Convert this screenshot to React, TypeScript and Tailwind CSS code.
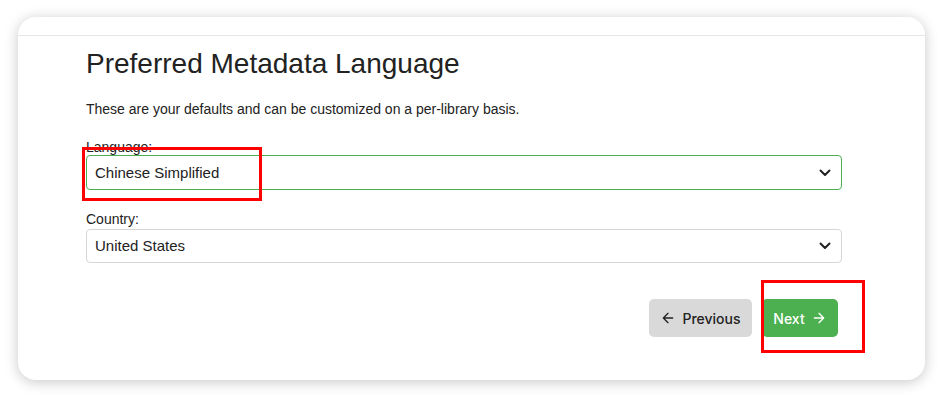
import React from "react";

function Chevron() {
  return (
    <svg width="12" height="8" viewBox="0 0 12 8" fill="none" className="shrink-0">
      <path d="M1.5 1.5 6 6l4.5-4.5" stroke="#222" strokeWidth="2" strokeLinecap="round" strokeLinejoin="round" />
    </svg>
  );
}

function SelectBox({ value, active }: { value: string; active?: boolean }) {
  return (
    <div
      className={`flex items-center justify-between rounded-[4px] border bg-white pl-[8px] pr-[10px] text-[15px] text-[#222] ${
        active ? "h-[35px] border-[#4caf50]" : "h-[34px] border-[#d6d6d6]"
      }`}
    >
      <span>{value}</span>
      <Chevron />
    </div>
  );
}

export default function App() {
  return (
    <div
      className="relative h-[398px] w-[943px] overflow-hidden bg-white px-[18px] pt-[17px]"
      style={{ fontFamily: '"Liberation Sans", Arial, sans-serif' }}
    >
      <div className="h-[363px] rounded-[18px] bg-white shadow-[0_2px_14px_rgba(0,0,0,0.22)]">
        <div className="h-[19px] border-b border-[#e6e6e6]" />
        <div className="pl-[68px] pr-[83px]">
          <h1 className="mt-[12px] text-[28px] leading-[32px] text-[#222]">Preferred Metadata Language</h1>
          <p className="mt-[19px] text-[14px] leading-[20px] text-[#222]">
            These are your defaults and can be customized on a per-library basis.
          </p>
          <div className="mt-[18px] text-[14px] leading-[20px] text-[#222]">
            <div className="-mb-[1px] h-[19px] overflow-hidden">Language:</div>
            <SelectBox value="Chinese Simplified" active />
            <div className="mt-[19px] h-[20px]">Country:</div>
            <SelectBox value="United States" />
          </div>
          <div
            className="mt-[36px] flex justify-end gap-[10px] pr-[4px] text-[14px] font-medium"
            style={{ fontFamily: "Inter, sans-serif" }}
          >
            <button className="flex h-[38px] w-[103px] items-center justify-center gap-[6px] rounded-[5px] bg-[#d9d9d9] text-[#222]">
              <svg width="16" height="16" viewBox="0 0 24 24" fill="none" stroke="#222" strokeWidth="2" strokeLinecap="round" strokeLinejoin="round">
                <path d="M19 12H5M12 19l-7-7 7-7" />
              </svg>
              Previous
            </button>
            <button className="flex h-[38px] w-[76px] items-center justify-center gap-[6px] rounded-[5px] bg-[#4caf50] text-white">
              Next
              <svg width="16" height="16" viewBox="0 0 24 24" fill="none" stroke="#fff" strokeWidth="2" strokeLinecap="round" strokeLinejoin="round">
                <path d="M5 12h14M12 5l7 7-7 7" />
              </svg>
            </button>
          </div>
        </div>
      </div>
      <div className="absolute left-[82px] top-[147px] h-[54px] w-[180px] border-[3px] border-[#ff0000]" />
      <div className="absolute left-[761px] top-[280px] h-[73px] w-[104px] border-[3px] border-[#ff0000]" />
    </div>
  );
}
